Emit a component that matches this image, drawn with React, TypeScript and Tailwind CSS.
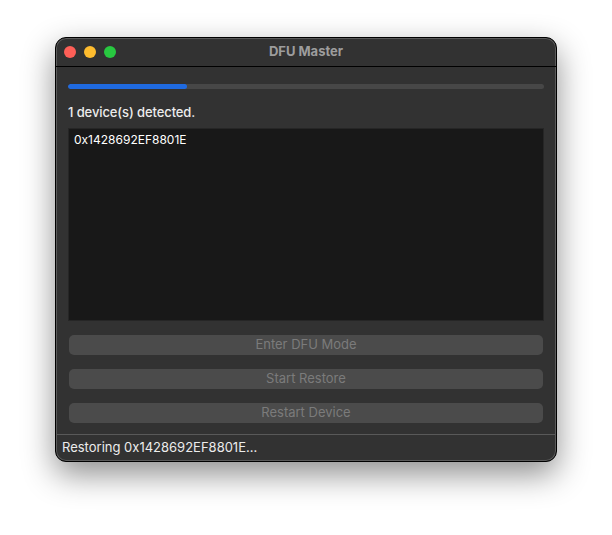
import React from "react";

const buttons = ["Enter DFU Mode", "Start Restore", "Restart Device"];

export default function App() {
  return (
    <div
      className="w-[612px] h-[535px] bg-white pt-[37px] pl-[55px]"
      style={{ fontFamily: "Inter, 'Liberation Sans', sans-serif" }}
    >
      <div className="w-[502px] h-[425px] rounded-[11px] border border-black bg-[#323232] shadow-[0_12px_32px_rgba(0,0,0,0.45),inset_0_0_0_1px_#5a5a5a] flex flex-col overflow-hidden">
        {/* title bar */}
        <div className="relative h-[29px] shrink-0 border-b border-black flex items-center justify-center">
          <div className="absolute left-[8px] top-[8px] flex gap-[8px]">
            <span className="w-[12px] h-[12px] rounded-full bg-[#fe5f57]" />
            <span className="w-[12px] h-[12px] rounded-full bg-[#febc2e]" />
            <span className="w-[12px] h-[12px] rounded-full bg-[#28c840]" />
          </div>
          <span className="text-[13px] font-bold text-[#9d9d9d]">DFU Master</span>
        </div>

        {/* content */}
        <div className="flex-1 flex flex-col px-[12px] pt-[17px]">
          <div className="h-[5px] rounded-full bg-[#474747] overflow-hidden">
            <div className="h-full w-[119px] rounded-full bg-[#1f6ae0]" />
          </div>
          <div className="mt-[15px] text-[13px] font-medium tracking-[-0.1px] text-[#ececec] leading-[16px]">
            1 device(s) detected.
          </div>
          <div className="mt-[8px] h-[193px] border border-[#262626] bg-[#181818] px-[5px] pt-[2px]">
            <div className="text-[12px] text-white leading-[17px]">0x1428692EF8801E</div>
          </div>
          <div className="mt-[14px] flex flex-col gap-[14px] px-[1px]">
            {buttons.map((b) => (
              <div
                key={b}
                className="h-[20px] rounded-[5px] bg-[#4b4b4b] flex items-center justify-center text-[13px] text-[#7b7b7b]"
              >
                {b}
              </div>
            ))}
          </div>
        </div>

        {/* status bar */}
        <div className="h-[27px] shrink-0 border-t border-[#595959] flex items-center px-[6px] text-[13px] text-[#ececec]">
          Restoring 0x1428692EF8801E...
        </div>
      </div>
    </div>
  );
}
